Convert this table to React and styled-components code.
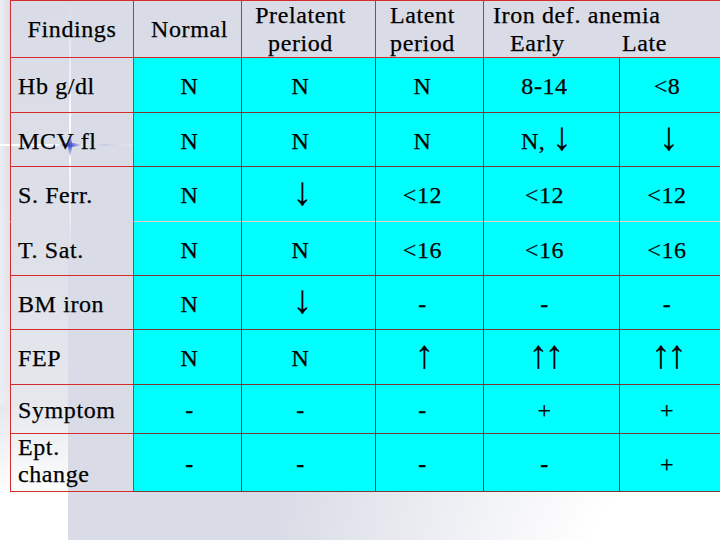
import React from 'react';
import styled, { createGlobalStyle } from 'styled-components';

const RED = '#d22c2c';
const CYAN = '#00ffff';
const GRID_V = '#4e3d3d';
const GRID_H = '#7e3636';
const SERIF = '"Liberation Serif", Tinos, "Times New Roman", serif';

const GlobalStyle = createGlobalStyle`
  html, body {
    margin: 0;
    padding: 0;
    background: #ffffff;
    font-family: ${SERIF};
  }
`;

const Slide = styled.div`
  position: relative;
  width: 720px;
  height: 540px;
  overflow: hidden;
  box-sizing: border-box;
  padding-left: 10px;
  background:
    linear-gradient(to right, #eceef3, rgba(236, 238, 243, 0)) 0 0 / 10px 75% no-repeat,
    linear-gradient(to bottom, #d9dce6 0%, #dee0e8 45%, #e6e8ee 75%, #ffffff 92%) 0 0 / 68px 100% no-repeat,
    radial-gradient(circle at 740px 600px, #ffffff 0px, #ffffff 160px, #d9dce6 470px);
`;

const Sparkle = styled.svg`
  position: absolute;
  left: 0;
  top: 0;
  z-index: 0;
  pointer-events: none;
`;

const Table = styled.table`
  position: relative;
  z-index: 1;
  border-collapse: separate;
  border-spacing: 0;
  table-layout: fixed;
  width: 710px;
  color: #000;
`;

const Row = styled.tr`
  height: ${p => p.$h}px;
`;

const textBase = `
  font-family: ${SERIF};
  font-size: 24px;
  letter-spacing: 0.6px;
  -webkit-text-stroke: 0.25px #000;
`;

const HeadCell = styled.th`
  ${textBase}
  font-weight: normal;
  line-height: 28px;
  padding: 0 ${p => p.$pr || 0}px 0 ${p => p.$pl || 0}px;
  text-align: ${p => p.$align || 'center'};
  vertical-align: middle;
  border-top: 1px solid ${RED};
  border-bottom: 1px solid ${RED};
  border-right: ${p => (p.$last ? 'none' : `1px solid ${RED}`)};
  border-left: ${p => (p.$first ? `1px solid ${RED}` : 'none')};
  white-space: nowrap;
`;

const SplitLine = styled.div`
  display: flex;
  gap: 57px;
  padding-left: 17px;
`;

const LabelCell = styled.td`
  ${textBase}
  padding: ${p => (p.$top ? 0 : 3)}px 0 0 7px;
  line-height: 27px;
  text-align: left;
  vertical-align: ${p => (p.$top ? 'top' : 'middle')};
  border-left: 1px solid ${RED};
  border-right: 1px solid ${RED};
  border-bottom: 1px solid ${p => (p.$soft ? 'transparent' : RED)};
`;

const ValueCell = styled.td`
  ${textBase}
  padding: 3px ${p => Math.max(0, -p.$shift * 2)}px 0 ${p => Math.max(0, p.$shift * 2)}px;
  background: ${CYAN};
  text-align: center;
  vertical-align: middle;
  font-weight: ${p => (p.$bold ? 'bold' : 'normal')};
  border-right: ${p => (p.$last ? 'none' : `1px solid ${GRID_V}`)};
  border-bottom: 1px solid ${p => (p.$soft ? '#f3caca' : GRID_H)};
`;

const Arrow = styled.span`
  font-size: 40px;
  line-height: 20px;
  letter-spacing: -4px;
  -webkit-text-stroke: 0.1px #000;
  vertical-align: -1px;
`;

const rows = [
  { label: ['Hb g/dl'], h: 55, cells: ['N', 'N', 'N', '8-14', '<8'] },
  { label: ['MCV fl'], h: 54, cells: ['N', 'N', 'N', 'N, \u2193', '\u2193'] },
  { label: ['S. Ferr.'], h: 55, cells: ['N', '\u2193', '<12', '<12', '<12'], soft: true },
  { label: ['T. Sat.'], h: 54, cells: ['N', 'N', '<16', '<16', '<16'] },
  { label: ['BM iron'], h: 54, cells: ['N', '\u2193', '-', '-', '-'] },
  { label: ['FEP'], h: 55, cells: ['N', 'N', '\u2191', '\u2191\u2191', '\u2191\u2191'] },
  { label: ['Symptom'], h: 49, cells: ['-', '-', '-', '+', '+'] },
  { label: ['Ept.', 'change'], h: 58, cells: ['-', '-', '-', '-', '+'], boldDash: true },
];

const widths = [124, 108, 134, 108, 136, 100];
// how far each value column's text sits off the cell centre in the slide
const shifts = [2, -8, -7, -7, -3];

function renderValue(text) {
  return text.split(/([\u2191\u2193]+)/).map((part, i) =>
    /[\u2191\u2193]/.test(part) ? <Arrow key={i}>{part}</Arrow> : part
  );
}

function SparkleMark() {
  return (
    <Sparkle width="160" height="260" viewBox="0 0 160 260">
      <defs>
        <linearGradient id="vline" x1="0" y1="0" x2="0" y2="1">
          <stop offset="0" stopColor="#ffffff" stopOpacity="0" />
          <stop offset="0.35" stopColor="#ffffff" stopOpacity="0.7" />
          <stop offset="0.56" stopColor="#ffffff" stopOpacity="1" />
          <stop offset="0.8" stopColor="#ffffff" stopOpacity="0.5" />
          <stop offset="1" stopColor="#ffffff" stopOpacity="0" />
        </linearGradient>
        <linearGradient id="hline" x1="0" y1="0" x2="1" y2="0">
          <stop offset="0" stopColor="#ffffff" stopOpacity="1" />
          <stop offset="0.44" stopColor="#ffffff" stopOpacity="1" />
          <stop offset="0.7" stopColor="#c8cce0" stopOpacity="0.9" />
          <stop offset="1" stopColor="#ffffff" stopOpacity="0" />
        </linearGradient>
        <radialGradient id="star" cx="0.5" cy="0.5" r="0.5">
          <stop offset="0" stopColor="#2a36c8" stopOpacity="0.95" />
          <stop offset="1" stopColor="#6a74d8" stopOpacity="0" />
        </radialGradient>
      </defs>
      <rect x="69" y="0" width="2" height="260" fill="url(#vline)" />
      <rect x="0" y="144" width="150" height="2" fill="url(#hline)" />
      <path d="M70 131 L72 143 L84 145 L72 147 L70 159 L68 147 L56 145 L68 143 Z" fill="url(#star)" />
    </Sparkle>
  );
}

function App() {
  return (
    <Slide>
      <GlobalStyle />
      <SparkleMark />
      <Table>
        <colgroup>
          {widths.map((w, i) => (
            <col key={i} style={{ width: w }} />
          ))}
        </colgroup>
        <thead>
          <Row $h={58}>
            <HeadCell $first>Findings</HeadCell>
            <HeadCell $pl={4}>Normal</HeadCell>
            <HeadCell $pr={16}>
              Prelatent
              <br />
              period
            </HeadCell>
            <HeadCell $pr={14}>
              Latent
              <br />
              period
            </HeadCell>
            <HeadCell colSpan={2} $align="left" $pl={9} $last>
              Iron def. anemia
              <SplitLine>
                <span>Early</span>
                <span>Late</span>
              </SplitLine>
            </HeadCell>
          </Row>
        </thead>
        <tbody>
          {rows.map(row => (
            <Row key={row.label[0]} $h={row.h}>
              <LabelCell $soft={row.soft} $top={row.label.length > 1}>
                {row.label.map((l, i) => (
                  <React.Fragment key={l}>
                    {i > 0 && <br />}
                    {l}
                  </React.Fragment>
                ))}
              </LabelCell>
              {row.cells.map((c, i) => (
                <ValueCell
                  key={i}
                  $soft={row.soft}
                  $shift={shifts[i]}
                  $last={i === row.cells.length - 1}
                  $bold={row.boldDash && c === '-'}
                >
                  {renderValue(c)}
                </ValueCell>
              ))}
            </Row>
          ))}
        </tbody>
      </Table>
    </Slide>
  );
}

export default App;
